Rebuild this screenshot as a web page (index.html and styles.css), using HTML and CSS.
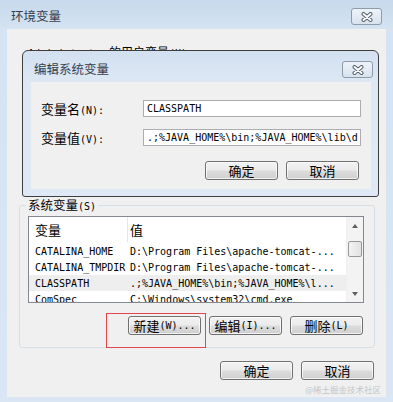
FILE: index.html
```html
<!DOCTYPE html>
<html lang="zh-CN">
<head>
    <meta charset="UTF-8">
    <title>环境变量</title>
    <link rel="stylesheet" href="styles.css">
</head>
<body>
    <div class="window">
        <div class="titlebar">
            <span class="title">环境变量</span>
            <span class="close-btn">
                <svg width="14" height="10" viewBox="0 0 14 10">
                    <path d="M3.5 2 L10.5 8 M10.5 2 L3.5 8" stroke="#56606c" stroke-width="4" stroke-linecap="round"/>
                    <path d="M3.5 2 L10.5 8 M10.5 2 L3.5 8" stroke="#fff" stroke-width="2" stroke-linecap="round"/>
                </svg>
            </span>
        </div>
        <div class="client">
            <div class="user-section">
                <span class="en">Administrator</span> 的用户变量<span class="en">(U)</span>
            </div>
            <div class="group-box">
                <div class="legend">系统变量<span class="en">(S)</span></div>
                <div class="listbox">
                    <div class="list-main">
                        <div class="list-head">
                            <span class="col-name">变量</span>
                            <span class="col-value">值</span>
                        </div>
                        <div class="row"><span class="col-name">CATALINA_HOME</span><span class="col-value">D:\Program Files\apache-tomcat-...</span></div>
                        <div class="row"><span class="col-name">CATALINA_TMPDIR</span><span class="col-value">D:\Program Files\apache-tomcat-...</span></div>
                        <div class="row selected"><span class="col-name">CLASSPATH</span><span class="col-value">.;%JAVA_HOME%\bin;%JAVA_HOME%\l...</span></div>
                        <div class="row"><span class="col-name">ComSpec</span><span class="col-value">C:\Windows\system32\cmd.exe</span></div>
                    </div>
                    <div class="scrollbar">
                        <div class="arrow up"></div>
                        <div class="track"><div class="thumb"></div></div>
                        <div class="arrow down"></div>
                    </div>
                </div>
                <div class="btn-row group-buttons">
                    <button class="btn">新建<span class="en">(W)...</span></button>
                    <button class="btn">编辑<span class="en">(I)...</span></button>
                    <button class="btn">删除<span class="en">(L)</span></button>
                </div>
            </div>
            <div class="btn-row footer">
                <button class="btn">确定</button>
                <button class="btn">取消</button>
            </div>
        </div>

        <div class="dialog">
            <div class="dialog-titlebar">
                <span class="title">编辑系统变量</span>
                <span class="close-btn">
                    <svg width="14" height="10" viewBox="0 0 14 10">
                        <path d="M3.5 2 L10.5 8 M10.5 2 L3.5 8" stroke="#56606c" stroke-width="4" stroke-linecap="round"/>
                        <path d="M3.5 2 L10.5 8 M10.5 2 L3.5 8" stroke="#fff" stroke-width="2" stroke-linecap="round"/>
                    </svg>
                </span>
            </div>
            <div class="dialog-client">
                <div class="field">
                    <label>变量名<span class="en">(N):</span></label>
                    <div class="input en">CLASSPATH</div>
                </div>
                <div class="field">
                    <label>变量值<span class="en">(V):</span></label>
                    <div class="input en">.;%JAVA_HOME%\bin;%JAVA_HOME%\lib\d</div>
                </div>
                <div class="btn-row dialog-buttons">
                    <button class="btn">确定</button>
                    <button class="btn">取消</button>
                </div>
            </div>
        </div>

        <div class="highlight"></div>
        <div class="watermark">@稀土掘金技术社区</div>
    </div>
</body>
</html>
```

FILE: styles.css
```css
* {
    box-sizing: border-box;
    margin: 0;
    padding: 0;
}
body {
    width: 393px;
    height: 402px;
    overflow: hidden;
    font-family: "Noto Sans CJK SC", sans-serif;
    font-size: 12px;
    color: #000;
}
.en {
    font-family: "DejaVu Sans Mono", monospace;
    font-size: 10px;
}
.window {
    position: relative;
    width: 393px;
    height: 402px;
    display: flex;
    flex-direction: column;
    padding: 0 7px 5px;
    background: linear-gradient(to bottom, #c7d9ed 0, #d5e3f2 29px, #dae6f3 100%);
}
.titlebar {
    height: 29px;
    display: flex;
    align-items: flex-start;
    justify-content: space-between;
    padding: 8px 4px 0;
}
.title {
    font-size: 12.5px;
    line-height: 16px;
    color: #34404e;
}
.close-btn {
    width: 31px;
    height: 17px;
    display: flex;
    align-items: center;
    justify-content: center;
    border: 1px solid #8d9bab;
    border-radius: 3px;
    background: linear-gradient(to bottom, #eef3f9, #d8e2ee);
}
.client {
    flex: 1;
    background: #f0f0f0;
    padding: 13px 12px 0;
    display: flex;
    flex-direction: column;
}
.user-section {
    height: 163px;
    padding: 3px 0 0 9px;
    line-height: 14px;
}

/* system variables group */
.group-box {
    width: 356px;
    border: 1px solid #d5dfe5;
    border-radius: 3px;
    padding: 0 10px 12px 8px;
    display: flex;
    flex-direction: column;
}
.legend {
    align-self: flex-start;
    margin: -9px 0 1px -2px;
    padding: 0 2px;
    line-height: 16px;
    font-size: 12.5px;
    background: #f0f0f0;
}
.listbox {
    height: 87px;
    border: 1px solid #828790;
    background: #fff;
    display: flex;
    overflow: hidden;
}
.list-main {
    flex: 1;
}
.list-head {
    height: 26px;
    display: flex;
    align-items: center;
    font-size: 13px;
    border-bottom: 1px solid #fff;
}
.list-head .col-name {
    border-right: 1px solid #e3e6ea;
    height: 100%;
    display: flex;
    align-items: center;
}
.col-name {
    width: 99px;
    padding-left: 6px;
    white-space: nowrap;
}
.col-value {
    padding-left: 2px;
    white-space: nowrap;
}
.row {
    height: 16px;
    display: flex;
    align-items: center;
    font-family: "DejaVu Sans Mono", monospace;
    font-size: 10px;
}
.row.selected {
    background: #eeeeee;
}
.scrollbar {
    width: 17px;
    display: flex;
    flex-direction: column;
    background: #f3f3f3;
    border-left: 1px solid #f0f0f0;
}
.arrow {
    height: 17px;
    display: flex;
    align-items: center;
    justify-content: center;
}
.arrow::before {
    content: "";
    border-left: 3.5px solid transparent;
    border-right: 3.5px solid transparent;
}
.arrow.up::before {
    border-bottom: 4px solid #606060;
}
.arrow.down::before {
    border-top: 4px solid #606060;
}
.track {
    flex: 1;
    padding: 7px 1px 0;
}
.thumb {
    height: 16px;
    border: 1px solid #979797;
    border-radius: 2px;
    background: linear-gradient(to right, #f3f3f3, #e2e2e2);
}

/* buttons */
.btn-row {
    display: flex;
    justify-content: flex-end;
    gap: 8px;
}
.btn {
    width: 73px;
    height: 19px;
    border: 1px solid #707070;
    border-radius: 3px;
    background: linear-gradient(to bottom, #f2f2f2 0%, #ebebeb 48%, #dddddd 52%, #cfcfcf 100%);
    font-family: "Noto Sans CJK SC", sans-serif;
    font-size: 13px;
    line-height: 16px;
    color: #000;
    display: flex;
    align-items: center;
    justify-content: center;
    box-shadow: inset 0 0 0 1px rgba(255, 255, 255, 0.7);
}
.group-buttons {
    margin-top: 13px;
    margin-right: 1px;
}
.footer {
    margin-top: 13px;
}

/* edit dialog on top */
.dialog {
    position: absolute;
    left: 22px;
    top: 50px;
    width: 357px;
    height: 147px;
    border: 1px solid #3f3f3f;
    border-radius: 6px 6px 3px 3px;
    background: linear-gradient(to bottom, #d2e0f0 0, #dde8f4 31px, #dfe9f5 100%);
    padding: 0 7px 7px 8px;
    display: flex;
    flex-direction: column;
}
.dialog-titlebar {
    height: 31px;
    display: flex;
    align-items: flex-start;
    justify-content: space-between;
    padding: 10px 0 0 3px;
    margin-right: -2px;
}
.dialog-client {
    flex: 1;
    background: #f0f0f0;
    padding: 17px 10px 0;
    display: flex;
    flex-direction: column;
    gap: 10px;
}
.field {
    display: flex;
    align-items: center;
    font-size: 13px;
}
.field label {
    width: 102px;
}
.input {
    width: 218px;
    height: 17px;
    border: 1px solid #abadb3;
    background: #fff;
    padding-left: 3px;
    line-height: 15px;
    white-space: nowrap;
    overflow: hidden;
}
.dialog-buttons {
    margin-top: 4px;
    margin-right: 2px;
}

/* annotation and watermark */
.highlight {
    position: absolute;
    left: 106px;
    top: 313px;
    width: 100px;
    height: 35px;
    border: 1px solid #e0474b;
}
.watermark {
    position: absolute;
    right: 12px;
    top: 383px;
    font-size: 8.5px;
    line-height: 12px;
    color: #c3c6ca;
}
```
